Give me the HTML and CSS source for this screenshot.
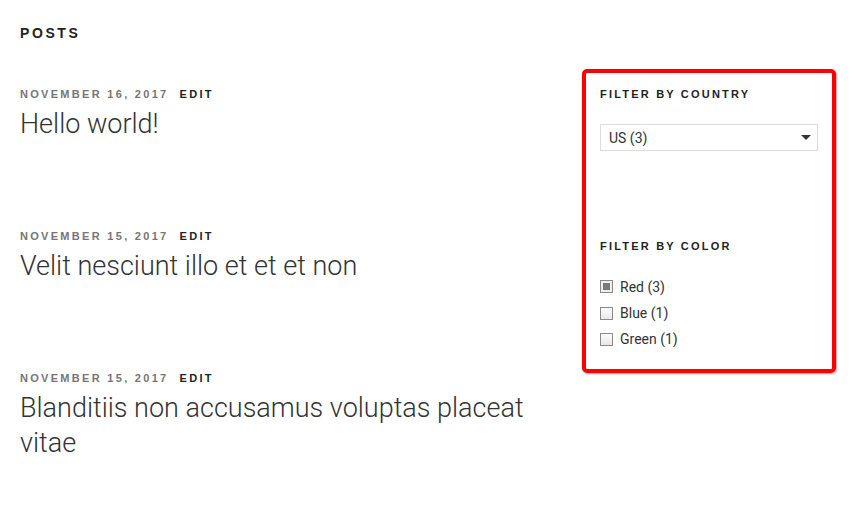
FILE: index.html
```html
<!DOCTYPE html>
<html lang="en">
<head>
<meta charset="utf-8">
<title>Posts</title>
<link rel="stylesheet" href="styles.css">
</head>
<body>
<div class="page">
  <main class="content">
    <h2 class="page-title">Posts</h2>
    <article class="post">
      <div class="meta"><span class="date">November 16, 2017</span><a class="edit" href="#">Edit</a></div>
      <h3 class="title">Hello world!</h3>
    </article>
    <article class="post">
      <div class="meta"><span class="date">November 15, 2017</span><a class="edit" href="#">Edit</a></div>
      <h3 class="title">Velit nesciunt illo et et et non</h3>
    </article>
    <article class="post">
      <div class="meta"><span class="date">November 15, 2017</span><a class="edit" href="#">Edit</a></div>
      <h3 class="title">Blanditiis non accusamus voluptas placeat vitae</h3>
    </article>
  </main>
  <aside class="sidebar">
    <section class="widget">
      <h4 class="widget-title">Filter by Country</h4>
      <div class="select-wrap">
        <select class="select"><option>US (3)</option></select>
      </div>
    </section>
    <section class="widget widget-color">
      <h4 class="widget-title">Filter by Color</h4>
      <ul class="checks">
        <li><span class="box checked"></span>Red (3)</li>
        <li><span class="box"></span>Blue (1)</li>
        <li><span class="box"></span>Green (1)</li>
      </ul>
    </section>
  </aside>
</div>
</body>
</html>
```
FILE: styles.css
```css
* { box-sizing: border-box; }
html, body { margin: 0; padding: 0; background: #fff; }
body { font-family: "Roboto", "Liberation Sans", sans-serif; color: #333; }

.page {
  display: flex;
  align-items: flex-start;
  padding: 0 28px 0 20px;
}
.content { width: 542px; }
.page-title {
  margin: 0;
  padding-top: 25px;
  font-family: "Liberation Sans", sans-serif;
  font-size: 14px;
  line-height: 16px;
  font-weight: 700;
  letter-spacing: 2.6px;
  text-transform: uppercase;
  color: #222;
}
.post { margin-top: 45px; }
.post + .post { margin-top: 86px; }
.meta {
  font-family: "Liberation Sans", sans-serif;
  font-size: 11px;
  line-height: 16px;
  font-weight: 700;
  letter-spacing: 2.3px;
  text-transform: uppercase;
  display: flex;
  gap: 11px;
}
.date { color: #767676; }
.edit { color: #222; text-decoration: none; }
.title {
  margin: 5px 0 0;
  font-size: 27px;
  line-height: 35px;
  font-weight: 300;
  color: #333;
}
.sidebar {
  margin-left: 20px;
  margin-top: 69px;
  width: 254px;
  border: 4px solid #f00;
  border-radius: 5px;
  box-shadow: 1px 1px 2px rgba(0,0,0,0.35);
  padding: 14px 14px 17px 14px;
}
.widget-title {
  margin: 0;
  font-family: "Liberation Sans", sans-serif;
  font-size: 11px;
  line-height: 14px;
  font-weight: 700;
  letter-spacing: 2.2px;
  text-transform: uppercase;
  color: #222;
}
.select-wrap { position: relative; margin-top: 23px; }
.select {
  display: block;
  width: 218px;
  height: 27px;
  margin: 0;
  padding: 0 0 0 8px;
  border: 1px solid #ddd;
  border-radius: 0;
  background: #fff;
  -webkit-appearance: none;
  appearance: none;
  font-family: "Roboto", sans-serif;
  font-size: 14px;
  color: #333;
}
.select-wrap::after {
  content: "";
  position: absolute;
  right: 7px;
  top: 11px;
  border-left: 5px solid transparent;
  border-right: 5px solid transparent;
  border-top: 5px solid #333;
}
.widget-color { margin-top: 88px; }
.checks { list-style: none; margin: 20px 0 0; padding: 0; }
.checks li {
  display: flex;
  align-items: center;
  height: 26px;
  font-size: 14px;
  color: #333;
}
.checks li:first-child { height: 27px; }
.box {
  width: 13px;
  height: 13px;
  margin-right: 7px;
  border: 1px solid #8a8a8a;
  background: linear-gradient(#fdfdfd, #e8e8e8);
}
.box.checked {
  background: #7a7a7a;
  box-shadow: inset 0 0 0 2px #eee;
}
```
